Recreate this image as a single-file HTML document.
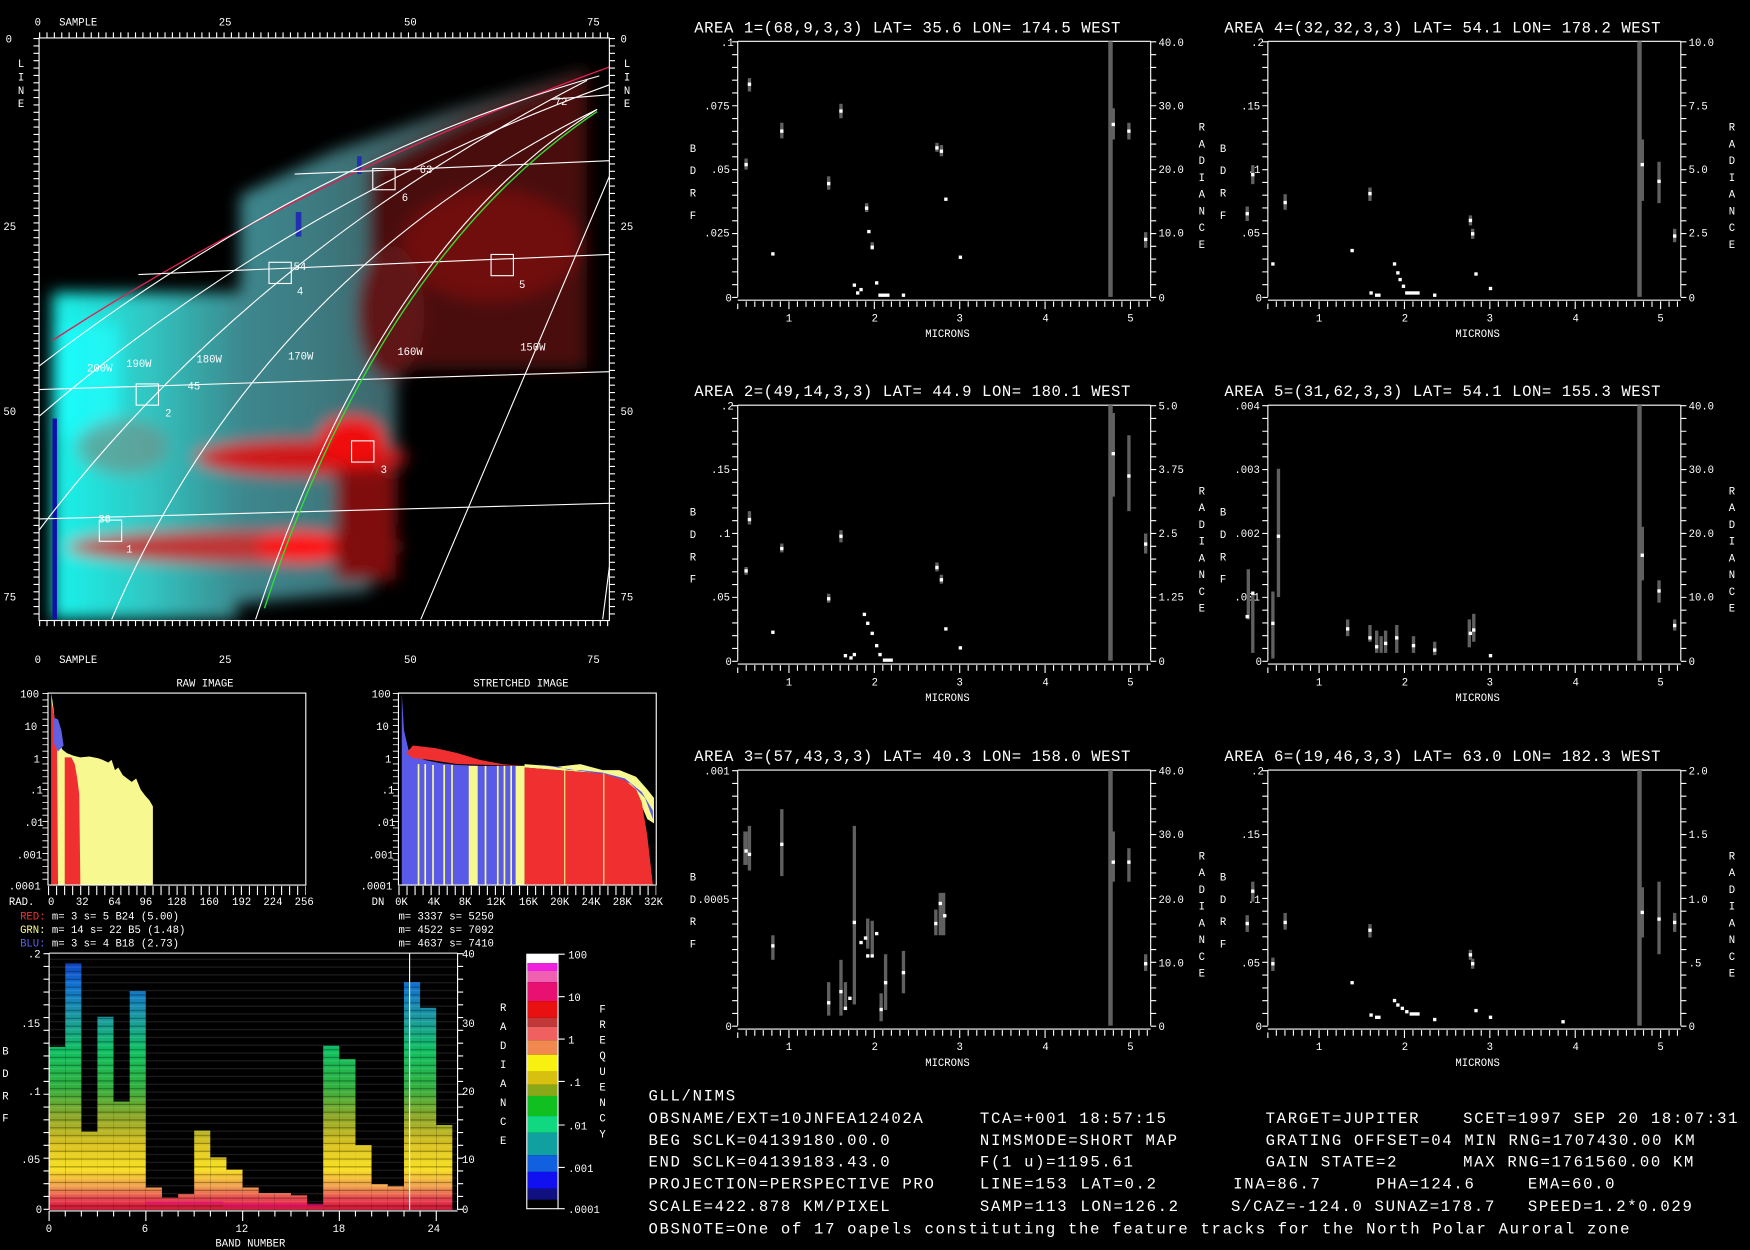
<!DOCTYPE html>
<html><head><meta charset="utf-8"><style>
html,body{margin:0;padding:0;background:#000;width:1750px;height:1250px;overflow:hidden}
svg{display:block}
text{font-family:"Liberation Mono",monospace;fill:#fff}
.s{font-size:9.5px}
.t{font-size:14px;letter-spacing:0.5px}
.i{font-size:14px;letter-spacing:1.5px}
</style></head><body>
<svg width="1750" height="1250" viewBox="0 0 1568 1120" xmlns="http://www.w3.org/2000/svg">
<defs>
<filter id="bl" x="-10%" y="-10%" width="120%" height="120%"><feGaussianBlur stdDeviation="7"/></filter>
<clipPath id="fr"><rect x="35" y="34" width="511" height="522"/></clipPath>
<linearGradient id="cy" x1="0" x2="1" y1="0" y2="0"><stop offset="0" stop-color="#18f4ec"/><stop offset="0.5" stop-color="#30c8c4"/><stop offset="1" stop-color="#3c8c90"/></linearGradient>
<linearGradient id="tl" x1="0" x2="1" y1="0" y2="0"><stop offset="0" stop-color="#3aa8b0"/><stop offset="0.5" stop-color="#3d7a80"/><stop offset="1" stop-color="#402a2a"/></linearGradient>
<linearGradient id="bg" gradientUnits="userSpaceOnUse" x1="0" y1="854" x2="0" y2="1084">
<stop offset="0" stop-color="#1030c0"/><stop offset="0.12" stop-color="#1070d0"/><stop offset="0.25" stop-color="#1a98a0"/><stop offset="0.38" stop-color="#10c060"/><stop offset="0.52" stop-color="#30b040"/><stop offset="0.64" stop-color="#90a828"/><stop offset="0.74" stop-color="#d8c020"/><stop offset="0.84" stop-color="#f8e020"/><stop offset="0.91" stop-color="#f0a050"/><stop offset="0.96" stop-color="#e84050"/><stop offset="1" stop-color="#d01030"/></linearGradient>
<pattern id="st" width="6" height="7" patternUnits="userSpaceOnUse"><rect y="2" width="6" height="1" fill="#000" opacity="0.35"/><rect y="5" width="6" height="1" fill="#fff" opacity="0.12"/></pattern>
<g id="ax">
<path d="M0 0H370M0 0V229M370 0V229M0 232H370" stroke="#fff" fill="none"/>
<path d="M-2.5 0V230" stroke="#fff" stroke-width="5" stroke-dasharray="1 10.45"/>
<path d="M372.5 0V230" stroke="#fff" stroke-width="5" stroke-dasharray="1 10.45"/>
<path d="M0 235V240M7.6 233V238M15.3 233V238M22.9 233V238M30.6 233V238M38.2 233V238M45.9 233V240M53.5 233V238M61.2 233V238M68.8 233V238M76.5 233V238M84.1 233V238M91.8 233V238M99.4 233V238M107 233V238M114.7 233V238M122.4 233V240M130 233V238M137.7 233V238M145.3 233V238M153 233V238M160.6 233V238M168.3 233V238M175.9 233V238M183.6 233V238M191.2 233V238M198.9 233V240M206.5 233V238M214.2 233V238M221.8 233V238M229.5 233V238M237.1 233V238M244.8 233V238M252.4 233V238M260.1 233V238M267.7 233V238M275.4 233V240M283 233V238M290.7 233V238M298.3 233V238M306 233V238M313.6 233V238M321.3 233V238M328.9 233V238M336.6 233V238M344.2 233V238M351.9 233V240M359.5 233V238M367 233V238" stroke="#fff"/>
</g>
</defs>

<!-- MAIN IMAGE -->
<g clip-path="url(#fr)">
<g filter="url(#bl)">
<polygon points="47,300 100,262 215,262 215,175 300,135 400,100 526,62 526,330 355,330 355,470 330,530 60,555 47,555" fill="url(#tl)"/>
<polygon points="330,150 420,105 526,66 526,330 355,330 330,260" fill="#4a1010"/>
<rect x="47" y="262" width="165" height="293" fill="url(#cy)"/>
<rect x="47" y="290" width="60" height="100" fill="#20ffff" opacity="0.7"/>
<ellipse cx="270" cy="410" rx="95" ry="16" fill="#d01818"/>
<ellipse cx="315" cy="395" rx="30" ry="22" fill="#f01010"/>
<ellipse cx="210" cy="490" rx="150" ry="14" fill="#c03030"/>
<ellipse cx="270" cy="490" rx="40" ry="14" fill="#ff1010"/>
<ellipse cx="440" cy="220" rx="80" ry="50" fill="#701010"/>
<ellipse cx="350" cy="280" rx="30" ry="60" fill="#601818"/>
<rect x="300" y="420" width="55" height="100" fill="#801010"/>
<ellipse cx="110" cy="400" rx="40" ry="25" fill="#7a8a80" opacity="0.6"/>
</g>
<rect x="47" y="375" width="4" height="180" fill="#1010a8"/>
<rect x="265" y="190" width="5" height="22" fill="#2030b0"/>
<rect x="320" y="140" width="4" height="16" fill="#2030b0"/>
<path d="M47 305Q270 160 546 60" stroke="#e02050" fill="none" stroke-width="1.2"/>
<g stroke="#fff" fill="none" stroke-width="1">
<path d="M35 328Q280 140 537 68"/>
<path d="M35 373Q260 180 546 76"/>
<path d="M35 475Q220 230 526 72"/>
<path d="M100 555Q230 250 535 98"/>
<path d="M229 555Q340 220 535 98"/>
<path d="M377 555L546 158"/>
<path d="M540 555L546 508"/>
<path d="M494 89L546 85M264 156L546 144M124 246L546 228M35 349L546 333M35 465L546 451"/>
<rect x="89" y="466" width="20" height="19"/><rect x="122" y="344" width="20" height="19"/><rect x="315" y="395" width="20" height="19"/><rect x="241" y="235" width="20" height="19"/><rect x="440" y="228" width="20" height="19"/><rect x="334" y="151" width="20" height="19"/>
</g>
<path d="M237 545Q340 230 535 100" stroke="#30e030" fill="none" stroke-width="1.2"/>
</g>
<rect x="35" y="34" width="511" height="522" fill="none" stroke="#fff"/>
<path d="M35 31.5H546M35 558.5H546" stroke="#fff" stroke-width="5" stroke-dasharray="1 5.61"/>
<path d="M32.5 34V556M548.5 34V556" stroke="#fff" stroke-width="5" stroke-dasharray="1 5.61"/>
<g class="s">
<text x="31" y="23">0</text><text x="53" y="23">SAMPLE</text><text x="196" y="23">25</text><text x="362" y="23">50</text><text x="526" y="23">75</text>
<text x="31" y="594">0</text><text x="53" y="594">SAMPLE</text><text x="196" y="594">25</text><text x="362" y="594">50</text><text x="526" y="594">75</text>
<text x="5" y="38">0</text><text x="3" y="206">25</text><text x="3" y="372">50</text><text x="3" y="538">75</text>
<text x="556" y="38">0</text><text x="556" y="206">25</text><text x="556" y="372">50</text><text x="556" y="538">75</text>
<text x="16" y="60">L</text><text x="16" y="72">I</text><text x="16" y="84">N</text><text x="16" y="96">E</text>
<text x="559" y="60">L</text><text x="559" y="72">I</text><text x="559" y="84">N</text><text x="559" y="96">E</text>
<text x="78" y="333">200W</text><text x="113" y="329">190W</text><text x="176" y="325">180W</text><text x="258" y="322">170W</text><text x="356" y="318">160W</text><text x="466" y="314">150W</text>
<text x="497" y="94">72</text><text x="376" y="155">63</text><text x="263" y="242">54</text><text x="168" y="349">45</text><text x="88" y="468">36</text>
<text x="113" y="495">1</text><text x="148" y="373">2</text><text x="341" y="424">3</text><text x="266" y="264">4</text><text x="465" y="258">5</text><text x="360" y="180">6</text>
</g>

<!-- SPECTRA PANELS -->
<use href="#ax" x="661" y="37"/><use href="#ax" x="1136" y="37"/>
<use href="#ax" x="661" y="363"/><use href="#ax" x="1136" y="363"/>
<use href="#ax" x="661" y="690"/><use href="#ax" x="1136" y="690"/>
<g class="t">
<text x="622" y="29">AREA 1=(68,9,3,3) LAT=  35.6 LON= 174.5 WEST</text>
<text x="1097" y="29">AREA 4=(32,32,3,3) LAT=  54.1 LON= 178.2 WEST</text>
<text x="622" y="355">AREA 2=(49,14,3,3) LAT=  44.9 LON= 180.1 WEST</text>
<text x="1097" y="355">AREA 5=(31,62,3,3) LAT=  54.1 LON= 155.3 WEST</text>
<text x="622" y="682">AREA 3=(57,43,3,3) LAT=  40.3 LON= 158.0 WEST</text>
<text x="1097" y="682">AREA 6=(19,46,3,3) LAT=  63.0 LON= 182.3 WEST</text>
</g>
<g class="s">
<text x="646" y="41">.1</text><text x="631" y="98">.075</text><text x="637" y="155">.05</text><text x="631" y="212">.025</text><text x="650" y="270">0</text>
<text x="1038" y="41">40.0</text><text x="1038" y="98">30.0</text><text x="1038" y="155">20.0</text><text x="1038" y="212">10.0</text><text x="1038" y="270">0</text>
<text x="1121" y="41">.2</text><text x="1112" y="98">.15</text><text x="1118" y="155">.1</text><text x="1112" y="212">.05</text><text x="1125" y="270">0</text>
<text x="1513" y="41">10.0</text><text x="1513" y="98">7.5</text><text x="1513" y="155">5.0</text><text x="1513" y="212">2.5</text><text x="1513" y="270">0</text>
<text x="646" y="367">.2</text><text x="637" y="424">.15</text><text x="643" y="481">.1</text><text x="637" y="538">.05</text><text x="650" y="596">0</text>
<text x="1038" y="367">5.0</text><text x="1038" y="424">3.75</text><text x="1038" y="481">2.5</text><text x="1038" y="538">1.25</text><text x="1038" y="596">0</text>
<text x="1106" y="367">.004</text><text x="1106" y="424">.003</text><text x="1106" y="481">.002</text><text x="1106" y="538">.001</text><text x="1125" y="596">0</text>
<text x="1513" y="367">40.0</text><text x="1513" y="424">30.0</text><text x="1513" y="481">20.0</text><text x="1513" y="538">10.0</text><text x="1513" y="596">0</text>
<text x="631" y="694">.001</text><text x="625" y="809">.0005</text><text x="650" y="923">0</text>
<text x="1038" y="694">40.0</text><text x="1038" y="751">30.0</text><text x="1038" y="809">20.0</text><text x="1038" y="866">10.0</text><text x="1038" y="923">0</text>
<text x="1121" y="694">.2</text><text x="1112" y="751">.15</text><text x="1118" y="809">.1</text><text x="1112" y="866">.05</text><text x="1125" y="923">0</text>
<text x="1513" y="694">2.0</text><text x="1513" y="751">1.5</text><text x="1513" y="809">1.0</text><text x="1513" y="866">.5</text><text x="1513" y="923">0</text>
</g>
<g id="xl" class="s">
<text x="704" y="288">1</text><text x="781" y="288">2</text><text x="857" y="288">3</text><text x="934" y="288">4</text><text x="1010" y="288">5</text><text x="829" y="302">MICRONS</text>
<text x="618" y="136">B</text><text x="618" y="156">D</text><text x="618" y="176">R</text><text x="618" y="196">F</text>
<text x="1074" y="117">R</text><text x="1074" y="132">A</text><text x="1074" y="147">D</text><text x="1074" y="162">I</text><text x="1074" y="177">A</text><text x="1074" y="192">N</text><text x="1074" y="207">C</text><text x="1074" y="222">E</text>
</g>
<use href="#xl" x="475" y="0"/><use href="#xl" x="0" y="326"/><use href="#xl" x="475" y="326"/><use href="#xl" x="0" y="653"/><use href="#xl" x="475" y="653"/>

<g fill="#606060">
<rect x="993" y="37" width="4" height="229"/><rect x="1467" y="37" width="4" height="229"/>
<rect x="993" y="363" width="4" height="229"/><rect x="1467" y="363" width="4" height="229"/>
<rect x="993" y="690" width="4" height="229"/><rect x="1467" y="690" width="4" height="229"/>
<rect x="667" y="142" width="3" height="10"/><rect x="670" y="70" width="3" height="12"/><rect x="699" y="110" width="3" height="14"/><rect x="741" y="158" width="3" height="12"/><rect x="752" y="93" width="3" height="13"/><rect x="775" y="182" width="3" height="8"/><rect x="780" y="217" width="3" height="7"/><rect x="838" y="128" width="3" height="8"/><rect x="842" y="130" width="3" height="10"/><rect x="996" y="97" width="3" height="28"/><rect x="1010" y="110" width="3" height="15"/><rect x="1025" y="208" width="3" height="14"/>
<rect x="1116" y="185" width="3" height="13"/><rect x="1121" y="148" width="3" height="17"/><rect x="1150" y="174" width="3" height="14"/><rect x="1226" y="168" width="3" height="12"/><rect x="1316" y="193" width="3" height="9"/><rect x="1318" y="205" width="3" height="9"/><rect x="1470" y="125" width="3" height="55"/><rect x="1485" y="145" width="3" height="37"/><rect x="1499" y="205" width="3" height="12"/>
<rect x="667" y="508" width="3" height="7"/><rect x="670" y="458" width="3" height="12"/><rect x="699" y="487" width="3" height="8"/><rect x="741" y="532" width="3" height="8"/><rect x="752" y="475" width="3" height="11"/><rect x="838" y="504" width="3" height="8"/><rect x="842" y="515" width="3" height="8"/><rect x="996" y="370" width="3" height="75"/><rect x="1010" y="390" width="3" height="68"/><rect x="1025" y="478" width="3" height="18"/>
<rect x="1117" y="510" width="3" height="45"/><rect x="1121" y="530" width="3" height="55"/><rect x="1139" y="530" width="3" height="60"/><rect x="1144" y="420" width="3" height="115"/><rect x="1206" y="555" width="3" height="15"/><rect x="1226" y="560" width="3" height="15"/><rect x="1232" y="565" width="3" height="20"/><rect x="1236" y="570" width="3" height="15"/><rect x="1240" y="565" width="3" height="20"/><rect x="1250" y="560" width="3" height="25"/><rect x="1265" y="570" width="3" height="15"/><rect x="1284" y="575" width="3" height="12"/><rect x="1315" y="555" width="3" height="25"/><rect x="1319" y="550" width="3" height="25"/><rect x="1470" y="472" width="3" height="48"/><rect x="1485" y="520" width="3" height="20"/><rect x="1499" y="555" width="3" height="10"/>
<rect x="666" y="745" width="4" height="30"/><rect x="670" y="740" width="3" height="40"/><rect x="691" y="838" width="3" height="22"/><rect x="699" y="725" width="3" height="60"/><rect x="741" y="880" width="3" height="30"/><rect x="752" y="860" width="3" height="50"/><rect x="756" y="880" width="3" height="25"/><rect x="764" y="740" width="3" height="160"/><rect x="776" y="823" width="3" height="27"/><rect x="780" y="825" width="3" height="30"/><rect x="788" y="890" width="3" height="25"/><rect x="792" y="855" width="3" height="50"/><rect x="808" y="852" width="3" height="38"/><rect x="837" y="815" width="3" height="23"/><rect x="841" y="800" width="6" height="38"/><rect x="996" y="745" width="3" height="45"/><rect x="1010" y="760" width="3" height="30"/><rect x="1025" y="855" width="3" height="15"/>
<rect x="1116" y="820" width="3" height="15"/><rect x="1121" y="790" width="3" height="18"/><rect x="1139" y="858" width="3" height="12"/><rect x="1150" y="818" width="3" height="15"/><rect x="1226" y="828" width="3" height="12"/><rect x="1316" y="851" width="3" height="9"/><rect x="1318" y="859" width="3" height="9"/><rect x="1470" y="795" width="3" height="45"/><rect x="1485" y="790" width="3" height="65"/><rect x="1499" y="818" width="3" height="17"/>
</g>
<g fill="#fff">
<rect x="667" y="146" width="3" height="3"/><rect x="670" y="74" width="3" height="3"/><rect x="691" y="226" width="3" height="3"/><rect x="699" y="116" width="3" height="3"/><rect x="741" y="163" width="3" height="3"/><rect x="752" y="98" width="3" height="3"/><rect x="764" y="254" width="3" height="3"/><rect x="767" y="261" width="3" height="3"/><rect x="770" y="258" width="3" height="3"/><rect x="775" y="185" width="3" height="3"/><rect x="777" y="206" width="3" height="3"/><rect x="780" y="220" width="3" height="3"/><rect x="784" y="252" width="3" height="3"/><rect x="787" y="263" width="10" height="3"/><rect x="808" y="263" width="3" height="3"/><rect x="838" y="131" width="3" height="3"/><rect x="842" y="134" width="3" height="3"/><rect x="846" y="177" width="3" height="3"/><rect x="859" y="229" width="3" height="3"/><rect x="996" y="110" width="3" height="3"/><rect x="1010" y="116" width="3" height="3"/><rect x="1025" y="213" width="3" height="3"/>
<rect x="1116" y="190" width="3" height="3"/><rect x="1121" y="155" width="3" height="3"/><rect x="1139" y="235" width="3" height="3"/><rect x="1150" y="180" width="3" height="3"/><rect x="1210" y="223" width="3" height="3"/><rect x="1226" y="172" width="3" height="3"/><rect x="1227" y="261" width="3" height="3"/><rect x="1232" y="263" width="5" height="3"/><rect x="1248" y="235" width="3" height="3"/><rect x="1251" y="243" width="3" height="3"/><rect x="1253" y="249" width="3" height="3"/><rect x="1256" y="255" width="3" height="3"/><rect x="1259" y="261" width="13" height="3"/><rect x="1284" y="263" width="3" height="3"/><rect x="1316" y="196" width="3" height="3"/><rect x="1318" y="208" width="3" height="3"/><rect x="1321" y="244" width="3" height="3"/><rect x="1334" y="257" width="3" height="3"/><rect x="1470" y="146" width="3" height="3"/><rect x="1485" y="161" width="3" height="3"/><rect x="1499" y="210" width="3" height="3"/>
<rect x="667" y="510" width="3" height="3"/><rect x="670" y="464" width="3" height="3"/><rect x="691" y="565" width="3" height="3"/><rect x="699" y="490" width="3" height="3"/><rect x="741" y="535" width="3" height="3"/><rect x="752" y="479" width="3" height="3"/><rect x="756" y="586" width="3" height="3"/><rect x="761" y="588" width="3" height="3"/><rect x="764" y="585" width="3" height="3"/><rect x="773" y="549" width="3" height="3"/><rect x="776" y="557" width="3" height="3"/><rect x="780" y="566" width="3" height="3"/><rect x="784" y="577" width="3" height="3"/><rect x="787" y="585" width="3" height="3"/><rect x="791" y="590" width="9" height="3"/><rect x="838" y="507" width="3" height="3"/><rect x="842" y="518" width="3" height="3"/><rect x="846" y="562" width="3" height="3"/><rect x="859" y="579" width="3" height="3"/><rect x="996" y="405" width="3" height="3"/><rect x="1010" y="425" width="3" height="3"/><rect x="1025" y="486" width="3" height="3"/>
<rect x="1116" y="551" width="3" height="3"/><rect x="1121" y="530" width="3" height="3"/><rect x="1139" y="557" width="3" height="3"/><rect x="1144" y="479" width="3" height="3"/><rect x="1206" y="562" width="3" height="3"/><rect x="1226" y="570" width="3" height="3"/><rect x="1232" y="578" width="3" height="3"/><rect x="1240" y="575" width="3" height="3"/><rect x="1250" y="570" width="3" height="3"/><rect x="1265" y="577" width="3" height="3"/><rect x="1284" y="581" width="3" height="3"/><rect x="1316" y="566" width="3" height="3"/><rect x="1319" y="563" width="3" height="3"/><rect x="1334" y="586" width="3" height="3"/><rect x="1470" y="496" width="3" height="3"/><rect x="1485" y="528" width="3" height="3"/><rect x="1499" y="559" width="3" height="3"/>
<rect x="667" y="761" width="3" height="3"/><rect x="670" y="764" width="3" height="3"/><rect x="691" y="846" width="3" height="3"/><rect x="699" y="755" width="3" height="3"/><rect x="741" y="897" width="3" height="3"/><rect x="752" y="887" width="3" height="3"/><rect x="756" y="902" width="3" height="3"/><rect x="760" y="893" width="3" height="3"/><rect x="764" y="825" width="3" height="3"/><rect x="770" y="843" width="3" height="3"/><rect x="774" y="839" width="3" height="3"/><rect x="776" y="855" width="3" height="3"/><rect x="780" y="855" width="3" height="3"/><rect x="784" y="835" width="3" height="3"/><rect x="788" y="903" width="3" height="3"/><rect x="792" y="879" width="3" height="3"/><rect x="808" y="870" width="3" height="3"/><rect x="837" y="826" width="3" height="3"/><rect x="841" y="808" width="3" height="3"/><rect x="845" y="819" width="3" height="3"/><rect x="996" y="771" width="3" height="3"/><rect x="1010" y="771" width="3" height="3"/><rect x="1025" y="862" width="3" height="3"/>
<rect x="1116" y="826" width="3" height="3"/><rect x="1121" y="797" width="3" height="3"/><rect x="1139" y="862" width="3" height="3"/><rect x="1150" y="825" width="3" height="3"/><rect x="1210" y="879" width="3" height="3"/><rect x="1226" y="832" width="3" height="3"/><rect x="1227" y="908" width="3" height="3"/><rect x="1232" y="910" width="5" height="3"/><rect x="1248" y="895" width="3" height="3"/><rect x="1251" y="899" width="3" height="3"/><rect x="1255" y="902" width="3" height="3"/><rect x="1259" y="905" width="3" height="3"/><rect x="1263" y="907" width="9" height="3"/><rect x="1284" y="912" width="3" height="3"/><rect x="1316" y="854" width="3" height="3"/><rect x="1318" y="862" width="3" height="3"/><rect x="1321" y="904" width="3" height="3"/><rect x="1334" y="910" width="3" height="3"/><rect x="1399" y="914" width="3" height="3"/><rect x="1470" y="816" width="3" height="3"/><rect x="1485" y="822" width="3" height="3"/><rect x="1499" y="825" width="3" height="3"/>
</g>

<!-- HISTOGRAMS -->
<g transform="matrix(1 0 0 0.7577 0 150.5)">
<path d="M46 848V621L48 640L50 665L53 680L56 688L60 692L66 695L72 697L80 696L88 698L92 700L97 703L100 700L103 712L106 709L110 718L114 722L118 726L122 722L126 735L130 742L134 748L137 755V848Z" fill="#f8f890"/>
<path d="M46 848V630L49 650L51 668L52 848Z M58 848V697L64 697L67 705L69 720L71 740L72 848Z" fill="#f03030"/>
<path d="M48 650L52 652L55 665L57 683L52 690L48 680Z" fill="#6060e0"/>
<path d="M360 848V621L362 665L366 688L372 695L380 700L395 704L410 706L430 707L470 707V848Z" fill="#5a5ae8"/>
<path d="M375 705V848M381 705V848M388 706V848M398 706V848M405 706V848M435 707V848M446 707V848M452 707V848M458 707V848" stroke="#f8f890" stroke-width="1.5"/>
<rect x="420" y="707" width="8" height="141" fill="#f8f890"/><rect x="462" y="707" width="8" height="141" fill="#f8f890"/>
<path d="M364 692L370 683L390 686L410 692L430 700L450 705L468 707L440 706L410 705L385 700L370 698Z" fill="#f03030"/>
<path d="M470 705L500 708L520 705L540 712L555 712L570 720L580 735L586 745L586 775L580 770L572 745L560 725L540 716L500 712L470 709Z" fill="#f8f890"/>
<path d="M480 705L500 708L510 712L520 712L540 715L560 722L575 738L585 760L585 770L578 745L565 728L545 718Z" fill="#5a5ae8"/>
<path d="M470 848V709L500 712L540 716L560 724L570 735L575 750L580 790L585 848Z" fill="#f03030"/>
<path d="M506 712V848M541 716V848" stroke="#f8f890"/>
<path d="M40.5 621V848M354.5 621V848" stroke="#fff" stroke-width="5" stroke-dasharray="1 6.57"/>
</g>
<rect x="43" y="621" width="231" height="172" fill="none" stroke="#fff"/>
<rect x="357" y="621" width="231" height="172" fill="none" stroke="#fff"/>
<path d="M43 798H274M357 798H588" stroke="#fff" stroke-width="8" stroke-dasharray="1 6.2"/>
<g class="s">
<text x="158" y="615">RAW IMAGE</text><text x="424" y="615">STRETCHED IMAGE</text>
<text x="18" y="625">100</text><text x="22" y="654">10</text><text x="30" y="683">1</text><text x="27" y="711">.1</text><text x="22" y="740">.01</text><text x="15" y="769">.001</text><text x="8" y="797">.0001</text>
<text x="333" y="625">100</text><text x="337" y="654">10</text><text x="345" y="683">1</text><text x="342" y="711">.1</text><text x="337" y="740">.01</text><text x="330" y="769">.001</text><text x="323" y="797">.0001</text>
<text x="8" y="811">RAD.</text><text x="43" y="811">0</text><text x="68" y="811">32</text><text x="97" y="811">64</text><text x="125" y="811">96</text><text x="150" y="811">128</text><text x="179" y="811">160</text><text x="208" y="811">192</text><text x="236" y="811">224</text><text x="264" y="811">256</text>
<text x="333" y="811">DN</text><text x="354" y="811">0K</text><text x="383" y="811">4K</text><text x="411" y="811">8K</text><text x="436" y="811">12K</text><text x="465" y="811">16K</text><text x="493" y="811">20K</text><text x="521" y="811">24K</text><text x="549" y="811">28K</text><text x="577" y="811">32K</text>
<text x="18" y="824"><tspan fill="#f03030">RED:</tspan> m=   3 s=   5 B24 (5.00)</text>
<text x="18" y="836"><tspan fill="#f8f890">GRN:</tspan> m=  14 s=  22 B5  (1.48)</text>
<text x="18" y="848"><tspan fill="#6060f0">BLU:</tspan> m=   3 s=   4 B18 (2.73)</text>
<text x="357" y="824">m= 3337 s= 5250</text><text x="357" y="836">m= 4522 s= 7092</text><text x="357" y="848">m= 4637 s= 7410</text>
</g>

<!-- BAND PLOT -->
<g fill="url(#bg)">
<rect x="44" y="938" width="14.4" height="146"/><rect x="58.5" y="863" width="14.4" height="221"/><rect x="72.9" y="1014" width="14.4" height="70"/><rect x="87.3" y="911" width="14.4" height="173"/><rect x="101.8" y="987" width="14.4" height="97"/><rect x="116.2" y="888" width="14.4" height="196"/><rect x="130.7" y="1064" width="14.4" height="20"/><rect x="145.1" y="1073" width="14.4" height="11"/><rect x="159.6" y="1070" width="14.4" height="14"/><rect x="174" y="1013" width="14.4" height="71"/><rect x="188.5" y="1037" width="14.4" height="47"/><rect x="202.9" y="1048" width="14.4" height="36"/><rect x="217.4" y="1064" width="14.4" height="20"/><rect x="231.8" y="1069" width="14.4" height="15"/><rect x="246.3" y="1069" width="14.4" height="15"/><rect x="260.7" y="1071" width="14.4" height="13"/><rect x="275.2" y="1080" width="14.4" height="4"/><rect x="289.6" y="937" width="14.4" height="147"/><rect x="304.1" y="949" width="14.4" height="135"/><rect x="318.5" y="1026" width="14.4" height="58"/><rect x="333" y="1061" width="14.4" height="23"/><rect x="347.4" y="1063" width="14.4" height="21"/><rect x="362" y="880" width="14.4" height="204"/><rect x="376.4" y="903" width="14.4" height="181"/><rect x="390.9" y="1008" width="14.4" height="76"/>
</g>
<rect x="44" y="854" width="366" height="230" fill="url(#st)"/>
<path d="M130.7 1078H200M200 1080H290" stroke="#e01070" stroke-width="3" opacity="0.7"/>
<path d="M44 854H410M44 854V1084M410 854V1084M367 854V1084M44 1085H410" stroke="#fff" fill="none"/>
<path d="M41.5 854V1084M412.5 854V1084" stroke="#fff" stroke-width="5" stroke-dasharray="1 10.45"/>
<path d="M44 1085V1094M58.5 1085V1090M72.9 1085V1090M87.3 1085V1090M101.8 1085V1090M116.2 1085V1090M130.7 1085V1094M145.1 1085V1090M159.6 1085V1090M174 1085V1090M188.5 1085V1090M202.9 1085V1090M217.4 1085V1094M231.8 1085V1090M246.3 1085V1090M260.7 1085V1090M275.2 1085V1090M289.6 1085V1090M304.1 1085V1094M318.5 1085V1090M333 1085V1090M347.4 1085V1090M362 1085V1090M376.4 1085V1090M390.9 1085V1094" stroke="#fff"/>
<g class="s">
<text x="25" y="858">.2</text><text x="19" y="920">.15</text><text x="25" y="981">.1</text><text x="19" y="1042">.05</text><text x="32" y="1087">0</text>
<text x="414" y="858">40</text><text x="414" y="920">30</text><text x="414" y="981">20</text><text x="414" y="1042">10</text><text x="414" y="1087">0</text>
<text x="41" y="1104">0</text><text x="127" y="1104">6</text><text x="211" y="1104">12</text><text x="298" y="1104">18</text><text x="383" y="1104">24</text>
<text x="193" y="1117">BAND NUMBER</text>
<text x="2" y="945">B</text><text x="2" y="965">D</text><text x="2" y="985">R</text><text x="2" y="1005">F</text>
<text x="448" y="906">R</text><text x="448" y="923">A</text><text x="448" y="940">D</text><text x="448" y="957">I</text><text x="448" y="974">A</text><text x="448" y="991">N</text><text x="448" y="1008">C</text><text x="448" y="1025">E</text>
<text x="537" y="907">F</text><text x="537" y="921">R</text><text x="537" y="935">E</text><text x="537" y="949">Q</text><text x="537" y="963">U</text><text x="537" y="977">E</text><text x="537" y="991">N</text><text x="537" y="1005">C</text><text x="537" y="1019">Y</text>
<text x="509" y="859">100</text><text x="509" y="897">10</text><text x="509" y="935">1</text><text x="509" y="973">.1</text><text x="509" y="1012">.01</text><text x="509" y="1050">.001</text><text x="509" y="1087">.0001</text>
</g>
<g>
<rect x="472" y="855" width="28" height="8" fill="#fff"/><rect x="472" y="863" width="28" height="7" fill="#f020e0"/><rect x="472" y="870" width="28" height="10" fill="#f060b0"/><rect x="472" y="880" width="28" height="17" fill="#e81070"/><rect x="472" y="897" width="28" height="15" fill="#e81010"/><rect x="472" y="912" width="28" height="8" fill="#c03838"/><rect x="472" y="920" width="28" height="12" fill="#f06060"/><rect x="472" y="932" width="28" height="13" fill="#f08850"/><rect x="472" y="945" width="28" height="15" fill="#f8f010"/><rect x="472" y="960" width="28" height="12" fill="#d8c010"/><rect x="472" y="972" width="28" height="10" fill="#88a818"/><rect x="472" y="982" width="28" height="18" fill="#10c020"/><rect x="472" y="1000" width="28" height="15" fill="#10d880"/><rect x="472" y="1015" width="28" height="20" fill="#10a0a0"/><rect x="472" y="1035" width="28" height="15" fill="#1060e0"/><rect x="472" y="1050" width="28" height="15" fill="#1010f0"/><rect x="472" y="1065" width="28" height="10" fill="#101080"/><rect x="472" y="1075" width="28" height="8" fill="#000"/>
<rect x="472" y="855" width="28" height="228" fill="none" stroke="#fff"/>
<path d="M500 855H506M500 893H506M500 931H506M500 969H506M500 1008H506M500 1046H506M500 1083H506" stroke="#fff"/>
</g>

<!-- INFO -->
<g class="i">
<text x="581" y="986">GLL/NIMS</text>
<text x="581" y="1006">OBSNAME/EXT=10JNFEA12402A</text><text x="878" y="1006">TCA=+001 18:57:15</text><text x="1134" y="1006">TARGET=JUPITER</text><text x="1311" y="1006">SCET=1997 SEP 20 18:07:31</text>
<text x="581" y="1026">BEG SCLK=04139180.00.0</text><text x="878" y="1026">NIMSMODE=SHORT MAP</text><text x="1134" y="1026">GRATING OFFSET=04 MIN RNG=1707430.00 KM</text>
<text x="581" y="1045">END SCLK=04139183.43.0</text><text x="878" y="1045">F(1 u)=1195.61</text><text x="1134" y="1045">GAIN STATE=2</text><text x="1311" y="1045">MAX RNG=1761560.00 KM</text>
<text x="581" y="1065">PROJECTION=PERSPECTIVE PRO</text><text x="878" y="1065">LINE=153</text><text x="968" y="1065">LAT=0.2</text><text x="1105" y="1065">INA=86.7</text><text x="1233" y="1065">PHA=124.6</text><text x="1369" y="1065">EMA=60.0</text>
<text x="581" y="1085">SCALE=422.878 KM/PIXEL</text><text x="878" y="1085">SAMP=113</text><text x="968" y="1085">LON=126.2</text><text x="1103" y="1085">S/CAZ=-124.0 SUNAZ=178.7</text><text x="1369" y="1085">SPEED=1.2*0.029</text>
<text x="581" y="1105">OBSNOTE=One of 17 oapels constituting the feature tracks for the North Polar Auroral zone</text>
</g>
</svg>
</body></html>
